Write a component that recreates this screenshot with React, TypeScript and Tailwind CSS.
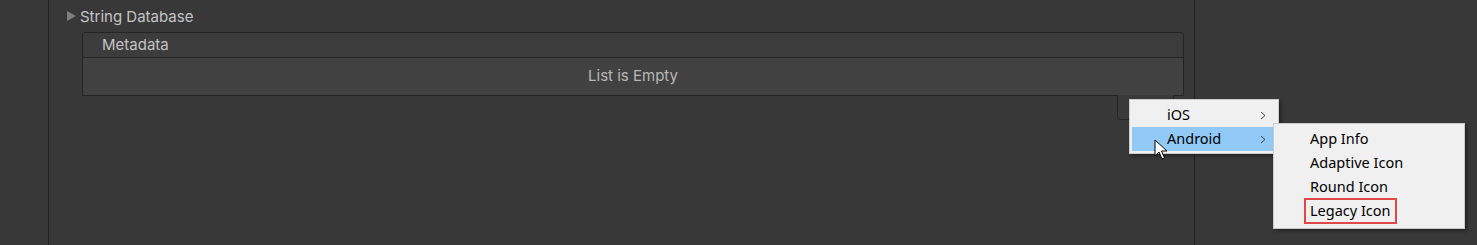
import React from "react";

const ui = { fontFamily: "Inter, 'Noto Sans', sans-serif" };
const menuFont = { fontFamily: "'Noto Sans', 'Open Sans', sans-serif" };

function Chevron() {
  return (
    <svg width="6" height="9" viewBox="0 0 6 9" className="block">
      <path d="M1 1 L5 4.5 L1 8" fill="none" stroke="#404040" strokeWidth="1" />
    </svg>
  );
}

function Cursor() {
  return (
    <svg width="14" height="22" viewBox="0 0 14 22" className="block">
      <path
        d="M1 1 L1 17 L5 13 L8 20 L10.5 19 L7.5 12 L13 12 Z"
        fill="#ffffff"
        stroke="#000000"
        strokeWidth="1"
        strokeLinejoin="round"
      />
    </svg>
  );
}

export default function App() {
  return (
    <div className="relative w-[1477px] h-[245px] bg-[#383838] flex overflow-hidden" style={ui}>
      <div className="w-[49px] h-full border-r border-[#232323]" />
      <div className="w-[1146px] h-full border-r border-[#232323] pl-[33px] pr-[10px]">
        <div className="flex items-center h-[16px] mt-[8px] -ml-[16px] gap-[3px] text-[15px] text-[#c4c4c4]">
          <svg width="11" height="12" viewBox="0 0 11 12" className="block">
            <path d="M1 1 L10 6 L1 11 Z" fill="#7e7e7e" />
          </svg>
          <span className="leading-none">String Database</span>
        </div>
        <div className="mt-[8px] border border-[#242424] rounded-t-[3px] overflow-hidden">
          <div className="h-[25px] bg-[#3c3c3c] border-b border-[#242424] flex items-center pl-[19px] text-[15px] text-[#c4c4c4]">
            Metadata
          </div>
          <div className="h-[37px] bg-[#414141] flex items-center justify-center text-[15px] text-[#b8b8b8]">
            List is Empty
          </div>
        </div>
        <div className="flex justify-end pr-[10px]">
          <div className="w-[57px] h-[25px] -mt-[1px] border border-t-0 border-[#242424] rounded-b-[4px] bg-[#3a3a3a]" />
        </div>
      </div>
      <div className="flex-1 h-full" />

      {/* first menu */}
      <div
        className="absolute left-[1129px] top-[99px] w-[150px] h-[55px] bg-[#f0f0f0] border border-[#cccccc] shadow-[2px_2px_3px_rgba(0,0,0,0.35)] pt-[3px] px-[2px] text-[14.5px] text-black"
        style={menuFont}
      >
        <div className="h-[24px] flex items-center pl-[35px] pr-[10px]">
          <span className="flex-1">iOS</span>
          <Chevron />
        </div>
        <div className="h-[24px] flex items-center pl-[35px] pr-[10px] bg-[#91c9f7]">
          <span className="flex-1">Android</span>
          <Chevron />
        </div>
      </div>

      {/* submenu */}
      <div
        className="absolute left-[1273px] top-[123px] w-[192px] h-[106px] bg-[#f0f0f0] border border-[#cccccc] shadow-[2px_2px_3px_rgba(0,0,0,0.35)] pt-[3px] text-[14.5px] text-black"
        style={menuFont}
      >
        {["App Info", "Adaptive Icon", "Round Icon"].map((t) => (
          <div key={t} className="h-[24px] flex items-center pl-[36px]">
            {t}
          </div>
        ))}
        <div className="h-[24px] flex items-center pl-[30px]">
          <span className="px-[4px] h-[26px] flex items-center border-2 border-[#e04848]">Legacy Icon</span>
        </div>
      </div>

      <div className="absolute left-[1154px] top-[139px]">
        <Cursor />
      </div>
    </div>
  );
}
